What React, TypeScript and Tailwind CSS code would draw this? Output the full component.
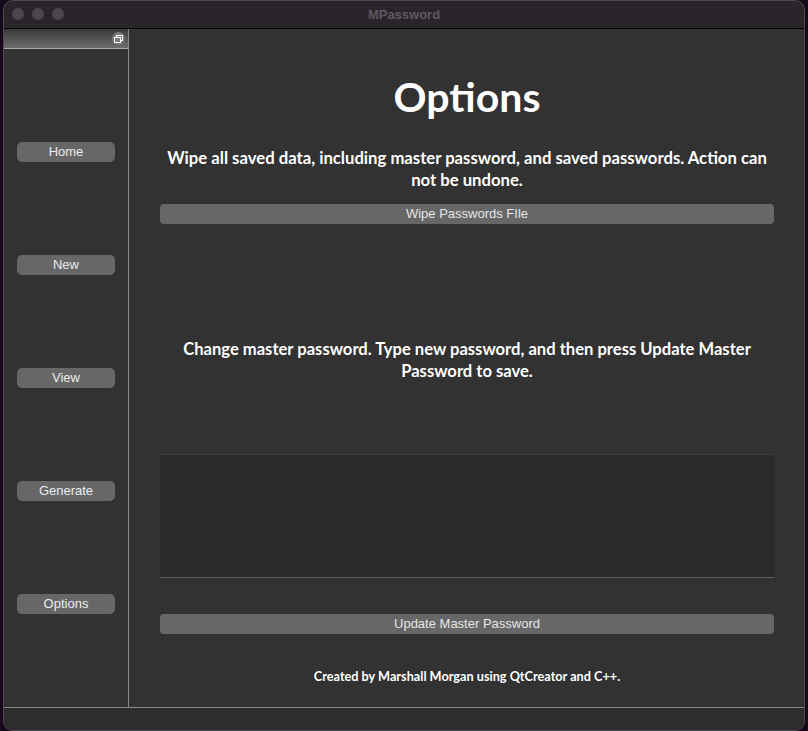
import React from "react";

const SideButton = ({ label }: { label: string }) => (
  <div className="ml-[13px] flex h-[20px] w-[98px] items-center justify-center rounded-[5px] bg-[#676767] text-[13px] text-[#ececec] [font-family:'Liberation_Sans',Arial,sans-serif]">
    {label}
  </div>
);

const WideButton = ({ label }: { label: string }) => (
  <div className="flex h-[20px] w-full items-center justify-center rounded-[4px] bg-[#676767] text-[13px] text-[#e6e6e6] [font-family:'Liberation_Sans',Arial,sans-serif]">
    {label}
  </div>
);

export default function App() {
  return (
    <div className="flex h-[731px] w-[808px] overflow-hidden bg-[#150a1b]">
      <div className="ml-[3px] flex h-[731px] w-[802px] flex-col overflow-hidden rounded-[10px] border border-[#4d4a4f] bg-[#323232]">
        {/* Title bar */}
        <div className="relative flex h-[28px] shrink-0 items-center justify-center border-b border-black bg-[#2a252b]">
          <div className="absolute left-[8px] top-[7px] flex gap-[8px]">
            <div className="h-[12px] w-[12px] rounded-full bg-[#4b464c]" />
            <div className="h-[12px] w-[12px] rounded-full bg-[#4b464c]" />
            <div className="h-[12px] w-[12px] rounded-full bg-[#4b464c]" />
          </div>
          <span className="text-[13px] font-bold text-[#5e595f] [font-family:'Liberation_Sans',Arial,sans-serif]">
            MPassword
          </span>
        </div>

        {/* Body */}
        <div className="flex h-[678px] shrink-0">
          {/* Sidebar */}
          <div className="flex w-[125px] shrink-0 flex-col border-r border-[#8a8a8a]">
            <div className="relative h-[20px] border-b border-[#a8a8a8] bg-gradient-to-b from-[#3a3a3a] to-[#6d6d6d]">
              <div className="absolute right-[3px] top-[3px] flex h-[13px] w-[13px] items-center justify-center rounded-full bg-[#7a7a7a]">
                <svg width="9" height="8" viewBox="0 0 9 8" fill="none">
                  <rect x="2.5" y="0.5" width="6" height="5" stroke="white" strokeWidth="1" />
                  <rect x="0.5" y="2.5" width="6" height="5" fill="#7a7a7a" stroke="white" strokeWidth="1" />
                </svg>
              </div>
            </div>
            <div className="mt-[93px] flex flex-col gap-[93px]">
              <SideButton label="Home" />
              <SideButton label="New" />
              <SideButton label="View" />
              <SideButton label="Generate" />
              <SideButton label="Options" />
            </div>
          </div>

          {/* Main */}
          <div className="flex flex-1 flex-col pl-[31px] pr-[30px] text-white [font-family:Lato,'Noto_Sans',sans-serif]">
            <div className="mt-[46px] h-[44px] text-center text-[41px] font-bold leading-[44px]">
              Options
            </div>
            <div className="mt-[28px] whitespace-nowrap text-center text-[16.7px] font-bold leading-[22px]">
              Wipe all saved data, including master password, and saved passwords. Action can
              <br />
              not be undone.
            </div>
            <div className="mt-[13px]">
              <WideButton label="Wipe Passwords FIle" />
            </div>
            <div className="mt-[114px] whitespace-nowrap text-center text-[16.6px] font-bold leading-[22px]">
              Change master password. Type new password, and then press Update Master
              <br />
              Password to save.
            </div>
            <div className="mt-[72px] h-[124px] border-t border-b border-t-[#3a3a3a] border-b-[#5c5c5c] bg-[#2a2a2a]" />
            <div className="mt-[36px]">
              <WideButton label="Update Master Password" />
            </div>
            <div className="mt-[34px] h-[16px] text-center text-[12.7px] font-bold leading-[16px]">
              Created by Marshall Morgan using QtCreator and C++.
            </div>
          </div>
        </div>

        {/* Status bar */}
        <div className="flex-1 border-t border-[#8a8a8a] bg-[#2d2d2d]" />
      </div>
    </div>
  );
}
